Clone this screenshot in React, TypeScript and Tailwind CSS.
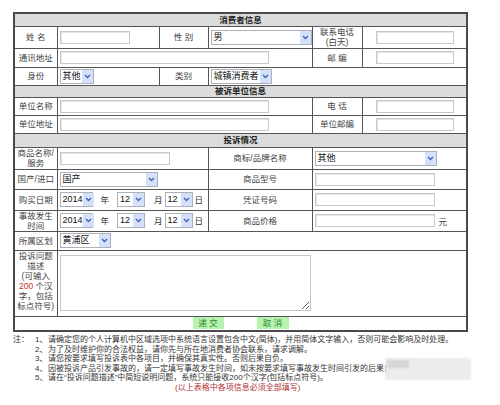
import React from "react";

function Field({ w }: { w: string }) {
  return <div className={`h-[13px] border border-[#c9c9c9] bg-white shadow-[inset_1px_1px_0_#e4e4e4] ${w}`} />;
}

function Select({ value, w }: { value: string; w: string }) {
  return (
    <div className={`flex h-[15px] items-center border border-[#a9b1bd] bg-white ${w}`}>
      <span className="flex-1 whitespace-nowrap pl-[2px] text-[9px] leading-none text-[#111]">{value}</span>
      <span className="flex h-[13px] w-[11px] shrink-0 items-center justify-center bg-[#d4e1f8]">
        <svg width="7" height="5" viewBox="0 0 7 5">
          <path d="M1 1l2.5 2.5L6 1" stroke="#3d62bd" strokeWidth="1.4" fill="none" />
        </svg>
      </span>
    </div>
  );
}

function Head({ title, h }: { title: string; h: string }) {
  return (
    <tr>
      <td colSpan={6} className={`border border-[#555] bg-[#dcdcdc] text-center font-bold text-[#222] ${h}`}>
        {title}
      </td>
    </tr>
  );
}

const cell = "border border-[#555] px-[2px]";
const label = "border border-[#555] whitespace-nowrap text-center leading-[10px] text-[#444]";

function DateRow() {
  return (
    <div className="flex items-center">
      <Select value="2014" w="w-[33px]" />
      <span className="ml-[8px] mr-[8px]">年</span>
      <Select value="12" w="w-[28px]" />
      <span className="ml-[9px] mr-[2px]">月</span>
      <Select value="12" w="w-[28px]" />
      <span className="ml-[2px]">日</span>
    </div>
  );
}

export default function App() {
  return (
    <div className="relative h-[405px] w-[500px] overflow-hidden bg-white pt-[12px] font-['Liberation_Sans','Noto_Sans_CJK_SC',sans-serif] text-[8.5px] leading-[10px] text-[#333]">
      <table className="ml-[13px] w-[453px] table-fixed border-collapse border-2 border-[#4a4a4a]">
        <colgroup>
          <col className="w-[43px]" />
          <col className="w-[102px]" />
          <col className="w-[49px]" />
          <col className="w-[104px]" />
          <col className="w-[50px]" />
          <col className="w-[105px]" />
        </colgroup>
        <tbody>
          <Head title="消费者信息" h="h-[13px]" />
          <tr className="h-[22px]">
            <td className={label}>姓&nbsp;名</td>
            <td className={cell}><Field w="w-[70px]" /></td>
            <td className={label}>性&nbsp;别</td>
            <td className={cell}><Select value="男" w="w-[101px]" /></td>
            <td className={label}>联系电话<br />(白天)</td>
            <td className={`${cell} pl-[13px]`}><Field w="w-[78px]" /></td>
          </tr>
          <tr className="h-[19px]">
            <td className={label}>通讯地址</td>
            <td colSpan={3} className={cell}><Field w="w-[209px]" /></td>
            <td className={label}>邮&nbsp;编</td>
            <td className={`${cell} pl-[13px]`}><Field w="w-[78px]" /></td>
          </tr>
          <tr className="h-[18px]">
            <td className={label}>身份</td>
            <td className={cell}><Select value="其他" w="w-[34px]" /></td>
            <td className={label}>类别</td>
            <td colSpan={3} className={cell}><Select value="城镇消费者" w="w-[61px]" /></td>
          </tr>
          <Head title="被诉单位信息" h="h-[12px]" />
          <tr className="h-[18px]">
            <td className={label}>单位名称</td>
            <td colSpan={3} className={cell}><Field w="w-[209px]" /></td>
            <td className={label}>电&nbsp;话</td>
            <td className={`${cell} pl-[13px]`}><Field w="w-[78px]" /></td>
          </tr>
          <tr className="h-[18px]">
            <td className={label}>单位地址</td>
            <td colSpan={3} className={cell}><Field w="w-[209px]" /></td>
            <td className={label}>单位邮编</td>
            <td className={`${cell} pl-[13px]`}><Field w="w-[78px]" /></td>
          </tr>
          <Head title="投诉情况" h="h-[14px]" />
          <tr className="h-[22px]">
            <td className={label}>商品名称/<br />服务</td>
            <td colSpan={2} className={cell}><Field w="w-[110px]" /></td>
            <td className={label}>商标/品牌名称</td>
            <td colSpan={2} className={cell}><Select value="其他" w="w-[122px]" /></td>
          </tr>
          <tr className="h-[20px]">
            <td className={label}>国产/进口</td>
            <td colSpan={2} className={cell}><Select value="国产" w="w-[98px]" /></td>
            <td className={label}>商品型号</td>
            <td colSpan={2} className={cell}><Field w="w-[120px]" /></td>
          </tr>
          <tr className="h-[21px]">
            <td className={label}>购买日期</td>
            <td colSpan={2} className={cell}><DateRow /></td>
            <td className={label}>凭证号码</td>
            <td colSpan={2} className={cell}><Field w="w-[120px]" /></td>
          </tr>
          <tr className="h-[20px]">
            <td className={label}>事故发生<br />时间</td>
            <td colSpan={2} className={cell}><DateRow /></td>
            <td className={label}>商品价格</td>
            <td colSpan={2} className={cell}>
              <div className="flex items-end gap-[4px]">
                <Field w="w-[120px]" />
                <span className="text-[#444]">元</span>
              </div>
            </td>
          </tr>
          <tr className="h-[19px]">
            <td className={label}>所属区划</td>
            <td colSpan={5} className={cell}><Select value="黄浦区" w="w-[51px]" /></td>
          </tr>
          <tr className="h-[66px]">
            <td className={`${label} align-top leading-[10.4px]`}>
              投诉问题<br />描述<br />(可输入<br /><span className="text-[#c0392b]">200</span> 个汉<br />字，包括<br />标点符号)
            </td>
            <td colSpan={5} className={cell}>
              <textarea className="block h-[56px] w-[251px] border border-[#c9c9c9] bg-white" />
            </td>
          </tr>
          <tr className="h-[15px]">
            <td colSpan={6} className="border border-[#555]">
              <div className="flex justify-center gap-[33px]">
                <button className="h-[12px] w-[31px] bg-[#b8f2b0] text-[8.5px] leading-[12px] text-[#2c8a2c]">递&nbsp;交</button>
                <button className="h-[12px] w-[32px] bg-[#b8f2b0] text-[8.5px] leading-[12px] text-[#2c8a2c]">取&nbsp;消</button>
              </div>
            </td>
          </tr>
        </tbody>
      </table>

      <div className="ml-[13px] mt-[3px] flex text-[8px] leading-[9.5px] text-[#333]">
        <span className="w-[22px] shrink-0">注：</span>
        <div className="flex flex-col">
          <div className="flex"><span className="w-[13px] shrink-0">1、</span>请确定您的个人计算机中区域选项中系统语言设置包含中文(简体)，并用简体文字输入，否则可能会影响及时处理。</div>
          <div className="flex"><span className="w-[13px] shrink-0">2、</span>为了及时维护你的合法权益，请你先与所在地消费者协会联系，请求调解。</div>
          <div className="flex"><span className="w-[13px] shrink-0">3、</span>请您按要求填写投诉表中各项目，并确保其真实性。否则后果自负。</div>
          <div className="flex"><span className="w-[13px] shrink-0">4、</span>因被投诉产品引发事故的，请一定填写事故发生时间，如未按要求填写事故发生时间引发的后果自负。</div>
          <div className="flex"><span className="w-[13px] shrink-0">5、</span>请在“投诉问题描述”中简短说明问题，系统只能接收200个汉字(包括标点符号)。</div>
          <div className="pl-[140px] text-[#b03030]">(以上表格中各项信息必须全部填写)</div>
        </div>
      </div>

      {/* blurred watermark */}
      <div className="absolute left-[385px] top-[358px] h-[22px] w-[86px] bg-[#ececec] blur-[1px]">
        <div className="ml-[2px] mt-[2px] h-[8px] w-[22px] bg-[#d6d6d6]" />
      </div>
    </div>
  );
}
